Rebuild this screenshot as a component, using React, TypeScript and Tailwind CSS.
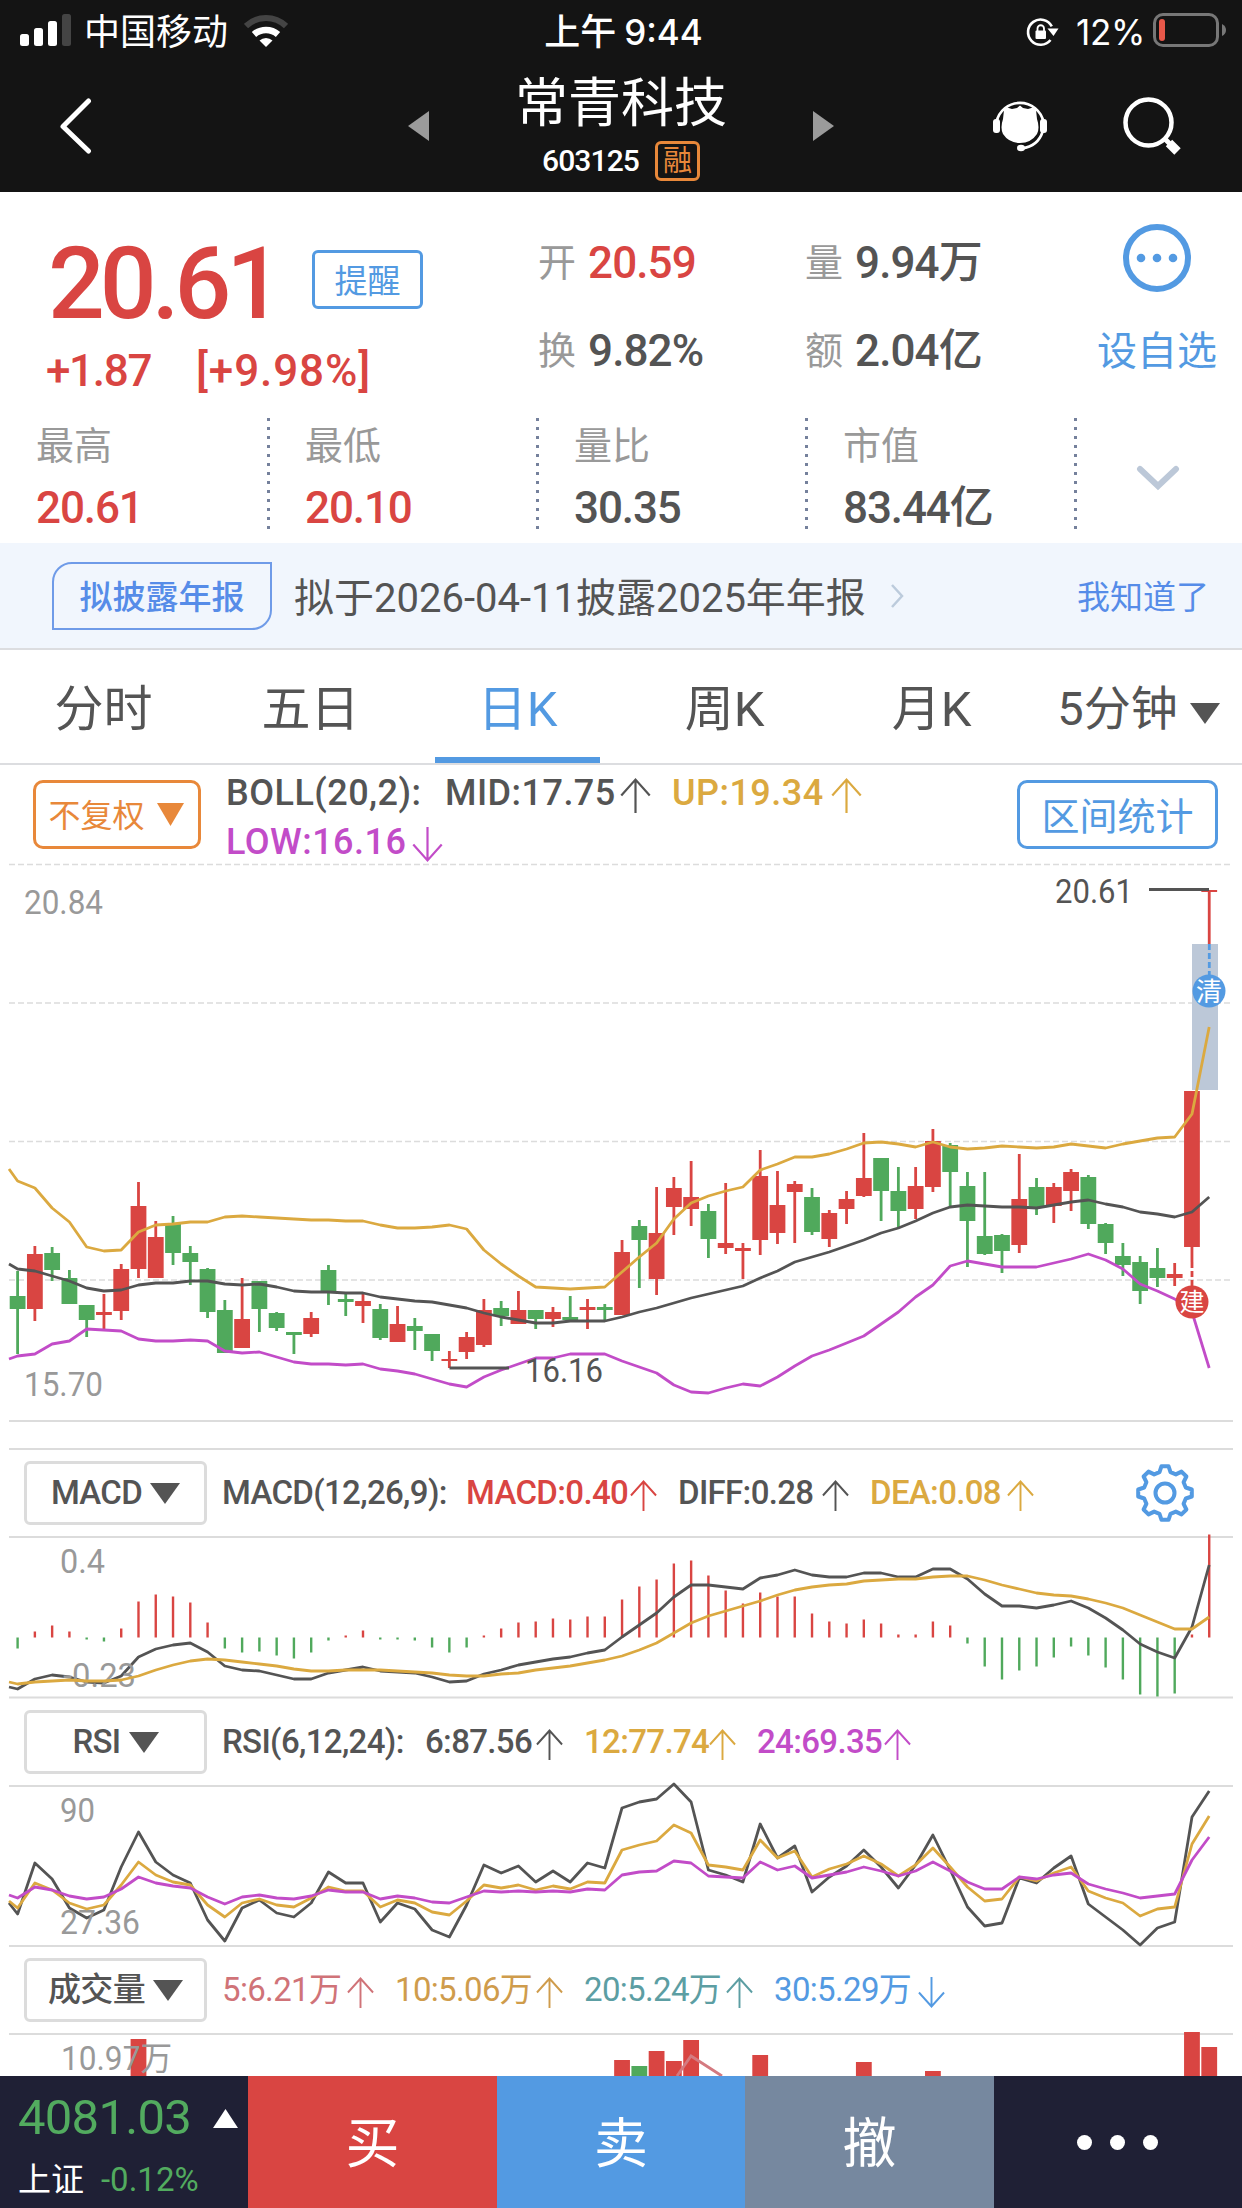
import type { ReactNode } from "react";
import clsx from "clsx";

type Candle = [dir: "r" | "g", high: number, top: number, bottom: number, low: number];

const RED = "#d94542";
const GREEN = "#50a95c";
const DARK = "#545454";
const GOLD = "#dba940";
const PURPLE = "#c24cc8";

const candleX = (i: number) => 17.6 + i * 17.27;

const candles: Candle[] = [
  ["g", 1271, 1296, 1309, 1354], ["r", 1246, 1254, 1309, 1321], ["g", 1247, 1253, 1270, 1281],
  ["g", 1270, 1278, 1304, 1304], ["g", 1305, 1305, 1320, 1337], ["r", 1294, 1312, 1315, 1329],
  ["r", 1264, 1269, 1311, 1320], ["r", 1182, 1206, 1269, 1278], ["r", 1221, 1237, 1278, 1278],
  ["g", 1216, 1224, 1253, 1265], ["g", 1246, 1253, 1262, 1285], ["g", 1268, 1269, 1312, 1318],
  ["g", 1300, 1310, 1353, 1353], ["r", 1278, 1319, 1348, 1348], ["g", 1281, 1281, 1309, 1332],
  ["g", 1312, 1313, 1328, 1331], ["g", 1332, 1332, 1335, 1354], ["r", 1312, 1318, 1334, 1337],
  ["g", 1265, 1270, 1292, 1305], ["g", 1293, 1299, 1302, 1316], ["r", 1293, 1301, 1306, 1323],
  ["g", 1304, 1309, 1338, 1340], ["r", 1306, 1324, 1342, 1342], ["g", 1318, 1326, 1331, 1350],
  ["g", 1334, 1334, 1351, 1361], ["r", 1351, 1359, 1361, 1368], ["r", 1332, 1337, 1352, 1359],
  ["r", 1299, 1310, 1345, 1347], ["g", 1301, 1308, 1316, 1326], ["r", 1291, 1310, 1324, 1324],
  ["g", 1310, 1310, 1319, 1329], ["r", 1307, 1312, 1319, 1327], ["g", 1296, 1317, 1320, 1320],
  ["r", 1299, 1307, 1310, 1329], ["g", 1304, 1307, 1310, 1322], ["r", 1240, 1252, 1315, 1315],
  ["g", 1220, 1226, 1240, 1288], ["r", 1187, 1233, 1279, 1295], ["r", 1177, 1188, 1207, 1235],
  ["r", 1161, 1197, 1209, 1226], ["g", 1204, 1211, 1239, 1258], ["r", 1183, 1243, 1248, 1254],
  ["r", 1243, 1248, 1251, 1279], ["r", 1150, 1176, 1240, 1255], ["r", 1171, 1205, 1233, 1244],
  ["r", 1181, 1184, 1192, 1243], ["g", 1188, 1197, 1232, 1235], ["r", 1210, 1213, 1239, 1247],
  ["r", 1191, 1199, 1209, 1224], ["r", 1133, 1178, 1196, 1197], ["g", 1158, 1158, 1191, 1221],
  ["g", 1167, 1191, 1211, 1227], ["r", 1167, 1186, 1209, 1219], ["r", 1129, 1141, 1187, 1192],
  ["g", 1143, 1145, 1172, 1207], ["g", 1172, 1186, 1221, 1267], ["g", 1172, 1236, 1254, 1255],
  ["g", 1234, 1235, 1251, 1273], ["r", 1154, 1199, 1245, 1253], ["g", 1178, 1187, 1207, 1215],
  ["r", 1183, 1187, 1206, 1223], ["r", 1169, 1172, 1191, 1211], ["g", 1175, 1177, 1224, 1229],
  ["g", 1223, 1224, 1243, 1254], ["g", 1243, 1256, 1265, 1276], ["g", 1256, 1262, 1291, 1304],
  ["g", 1248, 1268, 1278, 1287], ["r", 1263, 1274, 1278, 1286], ["r", 1091, 1091, 1247, 1262],
  ["r", 890, 890, 892, 944],
];

// Each series starts with the value at the left edge, then one value per candle
const bollUp = [
  1169, 1181, 1188, 1208, 1222, 1247, 1251, 1250, 1232, 1225, 1224, 1222, 1222, 1217, 1216, 1217, 1218, 1219,
  1220, 1220, 1221, 1221, 1225, 1228, 1228, 1227, 1225, 1229, 1250, 1264, 1276, 1287, 1288, 1289, 1288, 1287,
  1272, 1257, 1243, 1219, 1203, 1196, 1191, 1187, 1170, 1164, 1157, 1157, 1154, 1149, 1143, 1142, 1144, 1147,
  1142, 1147, 1149, 1148, 1146, 1147, 1148, 1147, 1144, 1146, 1148, 1144, 1141, 1138, 1137, 1114, 1027,
];
const bollMid = [
  1264, 1269, 1271, 1276, 1281, 1288, 1291, 1290, 1285, 1283, 1283, 1281, 1281, 1284, 1285, 1284, 1287, 1291,
  1292, 1292, 1293, 1293, 1297, 1299, 1301, 1302, 1305, 1308, 1313, 1317, 1320, 1323, 1323, 1321, 1321, 1321,
  1317, 1312, 1308, 1303, 1298, 1294, 1290, 1286, 1278, 1271, 1262, 1257, 1252, 1246, 1240, 1233, 1228, 1221,
  1213, 1207, 1205, 1206, 1207, 1207, 1208, 1205, 1202, 1200, 1204, 1207, 1212, 1214, 1217, 1212, 1197,
];
const bollLow = [
  1359, 1356, 1354, 1344, 1341, 1329, 1330, 1331, 1339, 1341, 1341, 1340, 1341, 1351, 1353, 1352, 1357, 1362,
  1364, 1364, 1365, 1364, 1369, 1371, 1374, 1379, 1384, 1387, 1377, 1370, 1364, 1358, 1358, 1354, 1354, 1354,
  1361, 1367, 1373, 1385, 1392, 1393, 1388, 1384, 1386, 1377, 1366, 1356, 1350, 1343, 1336, 1324, 1312, 1297,
  1285, 1266, 1261, 1264, 1267, 1267, 1267, 1263, 1259, 1254, 1260, 1269, 1284, 1291, 1299, 1312, 1368,
];

const macdBars = [
  -11, 6, 12, 6, -2, -4, 9, 36, 43, 41, 35, 15, -11, -15, -14, -18, -21, -15, -3, 2, 7, -2, -2, -3, -10, -15,
  -10, 2, 9, 15, 16, 19, 18, 21, 21, 38, 51, 58, 74, 77, 62, 47, 34, 45, 41, 41, 24, 16, 14, 18, 14, 3, 3, 16,
  12, -6, -29, -42, -33, -29, -20, -9, -18, -30, -42, -57, -59, -56, 3, 103,
];
const diff = [
  1687, 1689, 1679, 1675, 1677, 1682, 1683, 1676, 1657, 1649, 1645, 1643, 1652, 1666, 1670, 1671, 1675, 1679,
  1679, 1673, 1670, 1667, 1671, 1672, 1673, 1677, 1682, 1681, 1674, 1670, 1665, 1662, 1659, 1657, 1653, 1650,
  1637, 1625, 1613, 1597, 1585, 1585, 1587, 1589, 1578, 1575, 1570, 1575, 1577, 1577, 1573, 1573, 1577, 1577,
  1569, 1569, 1579, 1594, 1606, 1606, 1608, 1605, 1601, 1608, 1618, 1630, 1644, 1652, 1658, 1627, 1565,
];
const dea = [
  1682, 1684, 1682, 1681, 1680, 1681, 1681, 1680, 1676, 1670, 1665, 1661, 1659, 1660, 1662, 1664, 1666, 1669,
  1671, 1671, 1670, 1670, 1670, 1671, 1672, 1673, 1675, 1676, 1676, 1674, 1673, 1670, 1668, 1666, 1663, 1660,
  1656, 1650, 1643, 1633, 1623, 1616, 1611, 1606, 1601, 1595, 1590, 1587, 1585, 1584, 1581, 1580, 1579, 1579,
  1577, 1576, 1576, 1580, 1585, 1589, 1593, 1595, 1596, 1599, 1603, 1608, 1615, 1622, 1629, 1629, 1617,
];

const rsi6 = [
  1903, 1914, 1863, 1879, 1908, 1918, 1910, 1867, 1832, 1862, 1875, 1883, 1920, 1941, 1908, 1900, 1913, 1917,
  1903, 1872, 1883, 1883, 1922, 1903, 1909, 1930, 1937, 1905, 1865, 1873, 1866, 1882, 1871, 1882, 1863, 1868,
  1808, 1802, 1799, 1784, 1802, 1870, 1875, 1882, 1824, 1858, 1846, 1892, 1877, 1866, 1850, 1867, 1888, 1865,
  1835, 1870, 1907, 1926, 1923, 1878, 1883, 1868, 1856, 1904, 1917, 1930, 1945, 1928, 1922, 1817, 1791,
];
const rsi12 = [
  1901, 1908, 1883, 1890, 1903, 1909, 1905, 1885, 1862, 1875, 1882, 1885, 1905, 1917, 1903, 1899, 1905, 1907,
  1898, 1887, 1891, 1891, 1907, 1900, 1903, 1912, 1915, 1901, 1885, 1888, 1885, 1890, 1886, 1889, 1882, 1883,
  1850, 1845, 1841, 1825, 1833, 1865, 1867, 1870, 1840, 1858, 1851, 1877, 1869, 1864, 1856, 1864, 1876, 1865,
  1848, 1867, 1887, 1901, 1899, 1877, 1881, 1873, 1867, 1891, 1898, 1903, 1916, 1909, 1907, 1844, 1816,
];
const rsi24 = [
  1895, 1898, 1887, 1890, 1896, 1899, 1897, 1889, 1877, 1883, 1886, 1888, 1897, 1904, 1897, 1895, 1898, 1899,
  1896, 1890, 1892, 1892, 1899, 1896, 1898, 1902, 1903, 1897, 1891, 1892, 1891, 1892, 1891, 1892, 1889, 1890,
  1875, 1872, 1871, 1861, 1863, 1876, 1877, 1878, 1862, 1870, 1866, 1878, 1875, 1872, 1867, 1871, 1876, 1871,
  1862, 1871, 1882, 1889, 1889, 1877, 1879, 1875, 1873, 1884, 1889, 1893, 1898, 1896, 1894, 1860, 1837,
];

const volumes: [index: number, top: number, color: string][] = [
  [7, 2039, RED], [35, 2060, RED], [36, 2066, GREEN], [37, 2051, RED], [38, 2061, RED], [39, 2040, RED],
  [43, 2055, RED], [49, 2062, RED], [53, 2071, RED], [68, 2032, RED], [69, 2047, RED],
];

function Line({ data, color }: { data: number[]; color: string }) {
  const points = data.map((y, i) => `${i === 0 ? 9 : candleX(i - 1).toFixed(1)},${y}`).join(" ");
  return <polyline points={points} fill="none" stroke={color} strokeWidth="2.8" strokeLinejoin="round" />;
}

function AxisText({ x, y, width, children, fill = "#999" }: { x: number; y: number; width: number; children: string; fill?: string }) {
  return (
    <text x={x} y={y} fill={fill} fontSize="33" textLength={width} lengthAdjust="spacingAndGlyphs">
      {children}
    </text>
  );
}

function Rule({ y }: { y: number }) {
  return <path d={`M9 ${y}H1233`} stroke="#dcdcdc" strokeWidth="2" />;
}

function Triangle({ className, dir = "down" }: { className?: string; dir?: "up" | "down" | "left" | "right" }) {
  const shapes = { down: "0,0 10,0 5,10", up: "0,10 10,10 5,0", left: "10,0 10,10 0,5", right: "0,0 0,10 10,5" };
  return (
    <svg viewBox="0 0 10 10" preserveAspectRatio="none" className={clsx("shrink-0 fill-current", className)}>
      <polygon points={shapes[dir]} />
    </svg>
  );
}

function Legend({ children, className, arrow = "up", big }: { children: string; className: string; arrow?: "up" | "down"; big?: boolean }) {
  return (
    <span className={clsx("flex shrink-0 items-center justify-between whitespace-nowrap", className)}>
      <span>{children}</span>
      <svg
        viewBox="0 0 28 32"
        fill="none"
        stroke="currentColor"
        strokeWidth="2"
        className={clsx("shrink-0", big ? "mt-1 h-[35px] w-[31px]" : "mt-1 h-[31px] w-[27px]", arrow === "down" && "rotate-180")}
      >
        <path d="M14 1.5V32M1 16L14 1.5L27 16" />
      </svg>
    </span>
  );
}

function IndicatorBar({ name, children }: { name: string; children: ReactNode }) {
  return (
    <div className="flex h-[88px] items-center pl-6 text-[33px] font-medium tracking-[-0.02em] text-[#545454]">
      <button className="mr-[15px] flex h-[64px] w-[183px] shrink-0 items-center justify-center gap-2 rounded-md border-[3px] border-[#dcdcdc]">
        <span>{name}</span>
        <Triangle className="h-[21px] w-[30px]" />
      </button>
      {children}
    </div>
  );
}

function StatusBar() {
  return (
    <div className="flex h-[64px] items-center justify-between pl-5 pr-[15px] font-['Inter','Noto_Sans_CJK_SC',sans-serif]">
      <div className="flex w-[400px] items-center">
        <svg viewBox="0 0 52 32" className="h-8 w-[52px] shrink-0 -translate-y-[2px] fill-white">
          <rect y="20" width="9" height="12" rx="2.5" />
          <rect x="14" y="14" width="9" height="18" rx="2.5" />
          <rect x="28" y="7" width="9" height="25" rx="2.5" />
          <rect x="42" width="9" height="32" rx="2.5" fill="#444" />
        </svg>
        <span className="ml-3 w-[145px] text-[36px] leading-none">中国移动</span>
        <svg viewBox="0 0 44 33" className="ml-[15px] h-[33px] w-11 -translate-y-[2px]" fill="none">
          <path d="M2 12A29 29 0 0 1 42 12" stroke="#444" strokeWidth="6" />
          <path d="M10 20.5A18 18 0 0 1 34 20.5" stroke="white" strokeWidth="6.5" />
          <path d="M15.500 26.500A9.500 9.500 0 0 1 28.500 26.500L22 33Z" fill="white" />
        </svg>
      </div>
      <span className="flex items-center text-[36px] font-medium leading-none">
        上午<span className="ml-2 text-[35px]">9:44</span>
      </span>
      <div className="flex w-[400px] items-center justify-end">
        <svg viewBox="0 0 34 30" className="mr-4 h-[30px] w-[34px]" fill="none">
          <path d="M25.800 9.300A12.600 12.600 0 1 0 24.500 23" stroke="white" strokeWidth="2.600" />
          <path d="M21.500 11.500H32.500L27.500 19Z" fill="white" />
          <rect x="9.500" y="13.500" width="10.500" height="8.500" rx="1" fill="white" />
          <path d="M11.500 14V11.500A3.200 3.200 0 0 1 18 11.500V14" stroke="white" strokeWidth="1.800" />
        </svg>
        <span className="mr-2 text-[35px] leading-none tracking-[-0.01em]">12%</span>
        <svg viewBox="0 0 74 34" className="h-[34px] w-[74px] -translate-y-[2px]" fill="none">
          <rect x="1.500" y="1.500" width="63" height="31" rx="8.500" stroke="#777" strokeWidth="3" />
          <rect x="6" y="6" width="6" height="22" rx="3" fill="#e8584a" />
          <path d="M69 11Q73 13 73 17T69 23Z" fill="#777" />
        </svg>
      </div>
    </div>
  );
}

function TitleBar() {
  return (
    <div className="flex h-[124px] items-center">
      <div className="w-[408px] pl-[60px]">
        <svg viewBox="0 0 32 56" className="h-14 w-8" fill="none" stroke="white" strokeWidth="5" strokeLinecap="round" strokeLinejoin="round">
          <path d="M28.500 3L3 28.500L28.500 53" />
        </svg>
      </div>
      <Triangle dir="left" className="h-[30px] w-[21px] text-[#9b9b9b]" />
      <div className="flex h-full w-[384px] flex-col items-center">
        <h1 className="mt-[10px] text-[53px] leading-[60px]">常青科技</h1>
        <div className="mt-[7px] flex items-center gap-4">
          <span className="text-[30px] font-medium leading-none tracking-[-0.03em]">603125</span>
          <span className="flex h-10 w-[45px] items-center justify-center rounded-md border-[3px] border-[#e8883a] text-[29px] leading-none text-[#e8883a]">
            融
          </span>
        </div>
      </div>
      <Triangle dir="right" className="h-[30px] w-[21px] text-[#9b9b9b]" />
      <svg viewBox="0 0 54 54" className="ml-[159px] h-[54px] w-[54px]" fill="none">
        <path d="M3.500 23A24 24 0 0 1 50.500 23M49.500 33Q45 47 29 49.500" stroke="white" strokeWidth="2.600" />
        <rect y="20" width="7" height="14" rx="3" fill="white" />
        <rect x="47" y="20" width="7" height="14" rx="3" fill="white" />
        <path d="M10 20L11 11L14 8.500L19 10L24 9L27 6.500L30 9L35 10L40 8.500L43 11L44 20Q47 29 44 35Q38 44 27 44T10 35Q7 29 10 20Z" fill="white" />
        <ellipse cx="28" cy="49" rx="4" ry="3.300" fill="white" />
      </svg>
      <svg viewBox="0 0 58 58" className="ml-[76px] h-[58px] w-[58px]" fill="none">
        <circle cx="25.500" cy="25.500" r="23" stroke="white" strokeWidth="4.500" />
        <path d="M41 41L47 47" stroke="white" strokeWidth="5" />
        <path d="M46 46L54.500 54.500" stroke="white" strokeWidth="9" />
      </svg>
    </div>
  );
}

function Pair({ label, value, up }: { label: string; value: string; up?: boolean }) {
  return (
    <div className="flex items-center gap-3 whitespace-nowrap">
      <span className="text-[38px] text-[#999]">{label}</span>
      <span className={clsx("text-[44px] font-medium tracking-[-0.02em]", up && "text-[#d94542]")}>{value}</span>
    </div>
  );
}

function Stat({ label, value, up }: { label: string; value: string; up?: boolean }) {
  return (
    <div className="flex w-[269px] shrink-0 justify-between">
      <div>
        <div className="text-[38px] leading-[56px] text-[#999]">{label}</div>
        <div className={clsx("mt-[3px] whitespace-nowrap text-[44px] font-medium leading-[62px] tracking-[-0.025em]", up && "text-[#d94542]")}>{value}</div>
      </div>
      <svg className="mr-[35px] h-[111px] w-[3px]">
        <path d="M1.500 0V111" stroke="#75819c" strokeWidth="3" strokeDasharray="3 6" />
      </svg>
    </div>
  );
}

function QuotePanel() {
  return (
    <section className="h-[351px]">
      <div className="flex h-[226px]">
        <div className="w-[538px] pl-[46px]">
          <div className="flex h-[146px] items-start">
            <span className="w-[266px] pl-[2px] pt-[30px] text-[100px] font-medium leading-[124px] tracking-[-0.05em] text-[#d94542]">20.61</span>
            <span className="mt-[58px] flex h-[59px] w-[111px] items-center justify-center rounded-md border-[3px] border-[#539ae2] pt-[5px] text-[33px] text-[#539ae2]">
              提醒
            </span>
          </div>
          <div className="flex text-[44px] font-medium leading-[66px] tracking-[-0.03em] text-[#d94542]">
            <span className="w-[150px]">+1.87</span>
            <span className="tracking-[0.02em]">[+9.98%]</span>
          </div>
        </div>
        <div className="grid h-[203px] w-[540px] grid-cols-[267px_1fr] grid-rows-2 items-center pt-[27px]">
          <Pair label="开" value="20.59" up />
          <Pair label="量" value="9.94万" />
          <Pair label="换" value="9.82%" />
          <Pair label="额" value="2.04亿" />
        </div>
        <div className="flex w-[158px] flex-col items-center pt-8 text-[#539ae2]">
          <svg viewBox="0 0 68 68" className="h-[68px] w-[68px]">
            <circle cx="34" cy="34" r="31" fill="none" stroke="currentColor" strokeWidth="6" />
            <circle cx="18" cy="34" r="4.300" fill="currentColor" />
            <circle cx="34" cy="34" r="4.300" fill="currentColor" />
            <circle cx="50" cy="34" r="4.300" fill="currentColor" />
          </svg>
          <span className="mt-[30px] text-[40px] leading-[60px]">设自选</span>
        </div>
      </div>
      <div className="flex pl-[36px]">
        <Stat label="最高" value="20.61" up />
        <Stat label="最低" value="20.10" up />
        <Stat label="量比" value="30.35" />
        <Stat label="市值" value="83.44亿" />
        <svg viewBox="0 0 44 26" className="ml-6 mt-[47px] h-[26px] w-11" fill="none" stroke="#bcc8d8" strokeWidth="6" strokeLinecap="round">
          <path d="M4 4L22 21L40 4" />
        </svg>
      </div>
    </section>
  );
}

function Notice() {
  return (
    <section className="flex h-[107px] items-center border-b-2 border-[#dcdde0] bg-[#f1f6fd] pl-[52px] pr-[33px]">
      <span className="flex h-[68px] w-[220px] items-center justify-center rounded-tl-[20px] rounded-br-[20px] border-2 border-[#6f9be8] pt-1 text-[33px] font-medium text-[#568ce8]">
        拟披露年报
      </span>
      <span className="ml-[22px] w-[572px] whitespace-nowrap pt-[6px] text-[40px]">拟于2026-04-11披露2025年年报</span>
      <svg viewBox="0 0 14 24" className="ml-6 h-6 w-[14px]" fill="none" stroke="#bccbdc" strokeWidth="2.500">
        <path d="M2 1L12 12L2 23" />
      </svg>
      <span className="ml-auto pt-1 text-[33px] text-[#568ce8]">我知道了</span>
    </section>
  );
}

const tabs = ["分时", "五日", "日K", "周K", "月K", "5分钟"];

function Tabs() {
  return (
    <nav className="grid h-[115px] grid-cols-6 border-b-2 border-[#dcdde0] text-[49px]">
      {tabs.map((tab) => (
        <div key={tab} className={clsx("flex flex-col items-center justify-between whitespace-nowrap", tab === "日K" && "text-[#539ae2]")}>
          <div className="flex h-[107px] items-center gap-3 pt-3">
            {tab === "5分钟" ? <span className="text-[47px]">{tab}</span> : tab}
            {tab === "5分钟" && <Triangle className="mt-2 h-[21px] w-[30px]" />}
          </div>
          {tab === "日K" && <div className="h-[6px] w-[165px] bg-[#539ae2]" />}
        </div>
      ))}
    </nav>
  );
}

function BollBar() {
  return (
    <div className="flex h-[98px] items-start pl-[33px] pr-6">
      <button className="mt-[15px] flex h-[69px] w-[168px] items-center justify-center gap-3 rounded-[10px] border-[3px] border-[#e8883a] pr-[2px] text-[32px] text-[#e8883a]">
        <span className="pt-[2px]">不复权</span>
        <Triangle className="h-[23px] w-[27px]" />
      </button>
      <div className="ml-[25px] mt-1 w-[700px] text-[36px] font-medium leading-[49px] tracking-[0.013em]">
        <div className="flex gap-[21px]">
          <span className="w-[198px] whitespace-nowrap">BOLL(20,2):</span>
          <Legend big className="w-[206px]">MID:17.75</Legend>
          <Legend big className="w-[190px] text-[#dba940]">UP:19.34</Legend>
        </div>
        <Legend big arrow="down" className="w-[217px] text-[#c24cc8]">LOW:16.16</Legend>
      </div>
      <button className="ml-auto mt-[15px] flex h-[69px] w-[201px] items-center justify-center rounded-[10px] border-[3px] border-[#539ae2] pt-[6px] text-[38px] text-[#539ae2]">
        区间统计
      </button>
    </div>
  );
}

function CandleChart() {
  return (
    <svg viewBox="0 863 1242 586" className="block h-[586px] w-full overflow-visible">
      {[864.5, 1003, 1141.5, 1280].map((y) => (
        <path key={y} d={`M9 ${y}H1231`} stroke="#dcdcdc" strokeWidth="1.600" strokeDasharray="6 3" />
      ))}
      <Rule y={1421} />
      <Rule y={1449} />
      {candles.map(([dir, high, top, bottom, low], i) => (
        <g key={i} fill={dir === "r" ? RED : GREEN}>
          <rect x={candleX(i) - 1.4} y={high} width="2.800" height={low - high} />
          <rect x={candleX(i) - 7.9} y={top} width="15.800" height={bottom - top} />
        </g>
      ))}
      <rect x="1192" y="944" width="26" height="146" fill="#bcc8d8" />
      <path d="M1209.300 944V975" stroke="#539ae2" strokeWidth="2.800" strokeDasharray="6 3" />
      <path d="M1192 1262V1286" stroke={RED} strokeWidth="2.800" strokeDasharray="6 3" />
      <Line data={bollUp} color={GOLD} />
      <Line data={bollMid} color={DARK} />
      <Line data={bollLow} color={PURPLE} />
      <circle cx="1209" cy="991" r="16.500" fill="#539ae2" />
      <text x="1209" y="1001" textAnchor="middle" fill="white" fontSize="26">清</text>
      <circle cx="1192" cy="1302" r="16.500" fill={RED} />
      <text x="1192" y="1311" textAnchor="middle" fill="white" fontSize="25">建</text>
      <path d="M1149 889.500H1209M449.500 1368H509" stroke={DARK} strokeWidth="2.800" />
      <AxisText x={24} y={914} width={79}>20.84</AxisText>
      <AxisText x={24} y={1396} width={79}>15.70</AxisText>
      <AxisText x={1055} y={903} width={78} fill={DARK}>20.61</AxisText>
      <AxisText x={525} y={1382} width={78} fill={DARK}>16.16</AxisText>
    </svg>
  );
}

function MacdChart() {
  return (
    <svg viewBox="0 1536 1242 162" className="-mt-px block h-[162px] w-full overflow-visible">
      <Rule y={1537} />
      <Rule y={1697.5} />
      <AxisText x={60} y={1573} width={45}>0.4</AxisText>
      {macdBars.map((h, i) => (
        <path key={i} d={`M${candleX(i)} 1637.500v${-h}`} stroke={h > 0 ? RED : GREEN} strokeWidth="2.400" />
      ))}
      <Line data={diff} color={DARK} />
      <AxisText x={63} y={1687} width={73}>-0.23</AxisText>
      <Line data={dea} color={GOLD} />
    </svg>
  );
}

function RsiChart() {
  return (
    <svg viewBox="0 1785 1242 161" className="-mt-px block h-[161px] w-full overflow-visible">
      <Rule y={1786} />
      <Rule y={1946} />
      <AxisText x={60} y={1822} width={35}>90</AxisText>
      <Line data={rsi6} color={DARK} />
      <AxisText x={60} y={1934} width={80}>27.36</AxisText>
      <Line data={rsi12} color={GOLD} />
      <Line data={rsi24} color={PURPLE} />
    </svg>
  );
}

function VolumeChart() {
  return (
    <svg viewBox="0 2033 1242 43" className="-mt-px block h-[43px] w-full overflow-visible">
      <Rule y={2034} />
      {volumes.map(([i, top, color]) => (
        <rect key={i} x={candleX(i) - 7.9} y={top} width="15.800" height={2076 - top} fill={color} />
      ))}
      <path d="M677 2076L691 2056L722 2076" fill="none" stroke="#d47a80" strokeWidth="2.800" />
      <AxisText x={61} y={2070} width={111}>10.97万</AxisText>
    </svg>
  );
}

// Eight-toothed outline, generated so the teeth stay evenly spaced
function Gear() {
  const points: string[] = [];
  for (let i = 0; i < 8; i++) {
    const mid = (i * Math.PI) / 4 - Math.PI / 2;
    for (const [offset, r] of [[-0.26, 21.5], [-0.13, 27], [0.13, 27], [0.26, 21.5]]) {
      points.push(`${(29 + r * Math.cos(mid + offset)).toFixed(1)},${(29 + r * Math.sin(mid + offset)).toFixed(1)}`);
    }
  }
  return (
    <svg viewBox="0 0 58 58" className="ml-auto mr-[48px] h-[58px] w-[58px]" fill="none" stroke="#539ae2" strokeWidth="4" strokeLinejoin="round">
      <polygon points={points.join(" ")} />
      <circle cx="29" cy="29" r="9.500" />
    </svg>
  );
}

function BottomBar() {
  return (
    <footer className="relative grid h-[132px] grid-cols-5 text-[54px] text-white">
      <div className="bg-[#1f2035] pl-[18px] pt-[14px]">
        <div className="flex h-[56px] items-center text-[49px] tracking-[-0.015em] text-[#52ab5f]">
          <span className="w-[195px]">4081.03</span>
          <Triangle dir="up" className="h-[19px] w-[25px] text-white" />
        </div>
        <div className="mt-2 flex h-[52px] items-center text-[33px]">
          <span className="w-[83px]">上证</span>
          <span className="text-[#52ab5f]">-0.12%</span>
        </div>
      </div>
      <div className="flex items-center justify-center bg-[#d94542] pt-1">买</div>
      <div className="flex items-center justify-center bg-[#539ae2] pt-1">卖</div>
      <div className="flex items-center justify-center bg-[#76889f] pt-1">撤</div>
      <div className="flex items-center justify-center gap-[18px] bg-[#1f2035]">
        <i className="size-[15px] rounded-full bg-white" />
        <i className="size-[15px] rounded-full bg-white" />
        <i className="size-[15px] rounded-full bg-white" />
      </div>
    </footer>
  );
}

export default function App() {
  return (
    <main className="h-[2208px] w-[1242px] overflow-hidden bg-white font-['Roboto','Noto_Sans_CJK_SC',sans-serif] text-[#545454]">
      <header className="h-[192px] bg-[#141414] text-white">
        <StatusBar />
        <TitleBar />
      </header>
      <QuotePanel />
      <Notice />
      <Tabs />
      <BollBar />
      <CandleChart />
      <IndicatorBar name="MACD">
        <span className="w-[244px]">MACD(12,26,9):</span>
        <div className="flex gap-[21px]">
          <Legend className="w-[191px] text-[#d94542]">MACD:0.40</Legend>
          <Legend className="w-[171px]">DIFF:0.28</Legend>
          <Legend className="w-[164px] text-[#dba940]">DEA:0.08</Legend>
        </div>
        <Gear />
      </IndicatorBar>
      <MacdChart />
      <IndicatorBar name="RSI">
        <span className="w-[203px]">RSI(6,12,24):</span>
        <div className="flex gap-[21px]">
          <Legend className="w-[138px]">6:87.56</Legend>
          <Legend className="w-[152px] text-[#dba940]">12:77.74</Legend>
          <Legend className="w-[154px] text-[#c24cc8]">24:69.35</Legend>
        </div>
      </IndicatorBar>
      <RsiChart />
      <IndicatorBar name="成交量">
        <div className="flex gap-[21px] font-normal">
          <Legend className="w-[152px] text-[#d07378]">5:6.21万</Legend>
          <Legend className="w-[168px] text-[#cf9c4c]">10:5.06万</Legend>
          <Legend className="w-[169px] text-[#5c9ea3]">20:5.24万</Legend>
          <Legend className="w-[171px] text-[#539ae2]" arrow="down">30:5.29万</Legend>
        </div>
      </IndicatorBar>
      <VolumeChart />
      <BottomBar />
    </main>
  );
}
